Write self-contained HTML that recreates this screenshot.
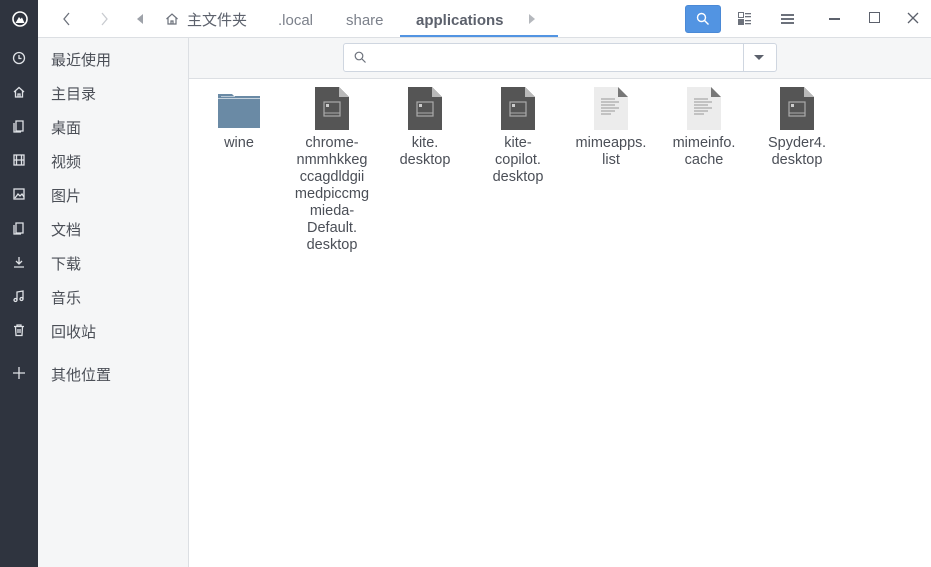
<!DOCTYPE html><html><head><meta charset="utf-8"><style>
*{margin:0;padding:0;box-sizing:border-box}
body{width:931px;height:567px;position:relative;background:#fff;font-family:"Liberation Sans","Noto Sans CJK SC",sans-serif;overflow:hidden;color:#5c616c}
.dock{position:absolute;left:0;top:0;width:38px;height:567px;background:#2f343f}
.dock svg{position:absolute;left:12px}
.hdr{position:absolute;left:38px;top:0;right:0;height:38px;background:#fff;border-bottom:1px solid #dcdfe3}
.side{position:absolute;left:38px;top:38px;width:151px;bottom:0;background:#f5f6f7;border-right:1px solid #dcdfe3}
.side div{position:absolute;left:13px;font-size:15px;color:#4b4f57}
.tb{position:absolute;left:189px;top:38px;right:0;height:41px;background:#f5f6f7;border-bottom:1px solid #dcdfe3}
.crumb{position:absolute;top:10px;font-size:15px;color:#7c818b}
.lat{top:12px}
.item{position:absolute;top:87px;width:90px;text-align:center;font-size:14.5px;line-height:17px;color:#4b4f57}
.item .ic{height:48px;position:relative}
</style></head><body>
<div class="dock">
<svg style="top:11px" width="16" height="16" viewBox="0 0 16 16"><circle cx="8" cy="8" r="7" fill="none" stroke="#fff" stroke-width="1.6"/><path d="M3.5 12 L7 6 L8.5 8 L10 6.5 L12.5 12Z" fill="#fff"/></svg>
<svg style="top:51px" width="14" height="14" viewBox="0 0 14 14" fill="none" stroke="#dfe2e6" stroke-width="1.3"><circle cx="7" cy="7" r="5.5"/><path d="M7 4v3.5h2.5"/></svg>
<svg style="top:85px" width="14" height="14" viewBox="0 0 14 14" fill="none" stroke="#dfe2e6" stroke-width="1.3"><path d="M2 7L7 2.5 12 7M3.5 6v6h7V6M6 12V9h2v3"/></svg>
<svg style="top:119px" width="14" height="14" viewBox="0 0 14 14" fill="none" stroke="#dfe2e6" stroke-width="1.3"><path d="M4 2h7v10H4zM2 4v9h7"/></svg>
<svg style="top:153px" width="14" height="14" viewBox="0 0 14 14" fill="none" stroke="#dfe2e6" stroke-width="1.3"><rect x="2" y="2" width="10" height="10"/><path d="M4.5 2v10M9.5 2v10M2 7h10"/></svg>
<svg style="top:187px" width="14" height="14" viewBox="0 0 14 14" fill="none" stroke="#dfe2e6" stroke-width="1.3"><rect x="2" y="2" width="10" height="10"/><path d="M3 11l3-4 2 2 2-2 2 3"/></svg>
<svg style="top:221px" width="14" height="14" viewBox="0 0 14 14" fill="none" stroke="#dfe2e6" stroke-width="1.3"><path d="M4 2h7v10H4zM2 4v9h7"/></svg>
<svg style="top:255px" width="14" height="14" viewBox="0 0 14 14" fill="none" stroke="#dfe2e6" stroke-width="1.3"><path d="M7 2v7M4 6l3 3 3-3M2 12h10"/></svg>
<svg style="top:289px" width="14" height="14" viewBox="0 0 14 14" fill="none" stroke="#dfe2e6" stroke-width="1.3"><path d="M5 11V3l6-1v8"/><circle cx="3.5" cy="11" r="1.5"/><circle cx="9.5" cy="10" r="1.5"/></svg>
<svg style="top:323px" width="14" height="14" viewBox="0 0 14 14" fill="none" stroke="#dfe2e6" stroke-width="1.3"><path d="M2 3.5h10M5 3.5V2h4v1.5M3.5 3.5l.5 9h6l.5-9M6 6v4M8 6v4"/></svg>
<svg style="top:366px" width="14" height="14" viewBox="0 0 14 14" fill="none" stroke="#dfe2e6" stroke-width="1.3"><path d="M7 1v12M1 7h12"/></svg>
</div>
<div class="hdr">
<svg style="position:absolute;left:24px;top:12px" width="10" height="14" viewBox="0 0 10 14" fill="none" stroke="#6c717b" stroke-width="1.3"><path d="M7 1L2 7l5 6"/></svg>
<svg style="position:absolute;left:61px;top:12px" width="10" height="14" viewBox="0 0 10 14" fill="none" stroke="#c8cbd0" stroke-width="1.3"><path d="M3 1l5 6-5 6"/></svg>
<svg style="position:absolute;left:99px;top:14px" width="6" height="10"><path d="M6 0L0 5l6 5z" fill="#9ea2a9"/></svg>
<svg style="position:absolute;left:127px;top:12px" width="14" height="14" viewBox="0 0 14 14" fill="none" stroke="#6c717b" stroke-width="1.2"><path d="M1.5 7L7 2l5.5 5M3 6v6h8V6M6 12V9h2v3"/></svg>
<div class="crumb" style="left:149px;top:9px;color:#5c616c">主文件夹</div>
<div class="crumb lat" style="left:240px">.local</div>
<div class="crumb lat" style="left:308px">share</div>
<div class="crumb lat" style="left:378px;font-weight:bold;color:#5c616c">applications</div>
<div style="position:absolute;left:362px;top:35px;width:158px;height:2px;background:#5294e2"></div>
<svg style="position:absolute;left:491px;top:14px" width="6" height="10"><path d="M0 0l6 5-6 5z" fill="#b5b8bd"/></svg>
<div style="position:absolute;left:647px;top:5px;width:36px;height:28px;background:#5294e2;border-radius:3px;border:1px solid #4a89d6"></div>
<svg style="position:absolute;left:658px;top:12px" width="14" height="14" viewBox="0 0 14 14" fill="none" stroke="#fff" stroke-width="1.4"><circle cx="5.5" cy="5.5" r="4"/><path d="M8.5 8.5L12.5 12.5"/></svg>
<svg style="position:absolute;left:700px;top:12px" width="13" height="13" viewBox="0 0 13 13" fill="#6c717b"><rect x="0.5" y="0.5" width="5" height="5" fill="none" stroke="#6c717b"/><rect x="7" y="1" width="6" height="1.3"/><rect x="7" y="4" width="6" height="1.3"/><rect x="0" y="7" width="6" height="6"/><rect x="7" y="8" width="6" height="1.3"/><rect x="7" y="11" width="6" height="1.3"/></svg>
<svg style="position:absolute;left:743px;top:13px" width="13" height="12" fill="#6c717b"><rect y="1" width="13" height="2"/><rect y="5" width="13" height="2"/><rect y="9" width="13" height="2"/></svg>
<div style="position:absolute;left:791px;top:18px;width:11px;height:1.5px;background:#5c616c"></div>
<div style="position:absolute;left:831px;top:12px;width:11px;height:11px;border:1.3px solid #5c616c"></div>
<svg style="position:absolute;left:869px;top:12px" width="12" height="12" stroke="#5c616c" stroke-width="1.3"><path d="M1 1l10 10M11 1L1 11"/></svg>
</div>
<div class="side">
<div style="top:11px">最近使用</div><div style="top:45px">主目录</div><div style="top:79px">桌面</div><div style="top:113px">视频</div><div style="top:147px">图片</div><div style="top:181px">文档</div><div style="top:215px">下载</div><div style="top:249px">音乐</div><div style="top:283px">回收站</div><div style="top:326px">其他位置</div>
</div>
<div class="tb">
<div style="position:absolute;left:154px;top:5px;width:434px;height:29px;background:#fff;border:1px solid #cfd6e0;border-radius:3px"></div>
<div style="position:absolute;left:554px;top:6px;width:1px;height:27px;background:#cfd6e0"></div>
<svg style="position:absolute;left:165px;top:13px" width="12" height="12" fill="none" stroke="#6c717b" stroke-width="1.2"><circle cx="5" cy="5" r="3.8"/><path d="M8 8l3.5 3.5"/></svg>
<svg style="position:absolute;left:565px;top:17px" width="10" height="6"><path d="M0 0h10L5 5z" fill="#5c616c"/></svg>
</div>
<div class="item" style="left:194px"><div class="ic"><svg style="position:absolute;left:24px;top:7px" width="42" height="34"><path d="M0 0h14l2 2h26v32H0z" fill="#6a8aa5"/><rect x="0" y="4" width="42" height="1" fill="#c8d4df"/><rect x="3" y="2" width="14" height="1" fill="#b8c8d6"/></svg></div>wine</div>
<div class="item" style="left:287px"><div class="ic"><svg style="position:absolute;left:28px;top:0" width="34" height="43"><path d="M0 0h24l10 10v33H0z" fill="#555"/><path d="M24 0v10h10z" fill="#b9b9b9"/><rect x="9" y="15" width="16" height="14" fill="none" stroke="#aaa" stroke-width="1.2"/><rect x="11" y="17" width="3" height="3" fill="#ccc"/><path d="M9 26h16" stroke="#aaa"/></svg></div>chrome-<br>nmmhkkeg<br>ccagdldgii<br>medpiccmg<br>mieda-<br>Default.<br>desktop</div>
<div class="item" style="left:380px"><div class="ic"><svg style="position:absolute;left:28px;top:0" width="34" height="43"><path d="M0 0h24l10 10v33H0z" fill="#555"/><path d="M24 0v10h10z" fill="#b9b9b9"/><rect x="9" y="15" width="16" height="14" fill="none" stroke="#aaa" stroke-width="1.2"/><rect x="11" y="17" width="3" height="3" fill="#ccc"/><path d="M9 26h16" stroke="#aaa"/></svg></div>kite.<br>desktop</div>
<div class="item" style="left:473px"><div class="ic"><svg style="position:absolute;left:28px;top:0" width="34" height="43"><path d="M0 0h24l10 10v33H0z" fill="#555"/><path d="M24 0v10h10z" fill="#b9b9b9"/><rect x="9" y="15" width="16" height="14" fill="none" stroke="#aaa" stroke-width="1.2"/><rect x="11" y="17" width="3" height="3" fill="#ccc"/><path d="M9 26h16" stroke="#aaa"/></svg></div>kite-<br>copilot.<br>desktop</div>
<div class="item" style="left:566px"><div class="ic"><svg style="position:absolute;left:28px;top:0" width="34" height="43"><path d="M0 0h24l10 10v33H0z" fill="#ececec"/><path d="M24 0v10h10z" fill="#777"/><path d="M7 12h14M7 15h18M7 18h14M7 21h18M7 24h14M7 27h10" stroke="#999"/></svg></div>mimeapps.<br>list</div>
<div class="item" style="left:659px"><div class="ic"><svg style="position:absolute;left:28px;top:0" width="34" height="43"><path d="M0 0h24l10 10v33H0z" fill="#ececec"/><path d="M24 0v10h10z" fill="#777"/><path d="M7 12h14M7 15h18M7 18h14M7 21h18M7 24h14M7 27h10" stroke="#999"/></svg></div>mimeinfo.<br>cache</div>
<div class="item" style="left:752px"><div class="ic"><svg style="position:absolute;left:28px;top:0" width="34" height="43"><path d="M0 0h24l10 10v33H0z" fill="#555"/><path d="M24 0v10h10z" fill="#b9b9b9"/><rect x="9" y="15" width="16" height="14" fill="none" stroke="#aaa" stroke-width="1.2"/><rect x="11" y="17" width="3" height="3" fill="#ccc"/><path d="M9 26h16" stroke="#aaa"/></svg></div>Spyder4.<br>desktop</div>
</body></html>
